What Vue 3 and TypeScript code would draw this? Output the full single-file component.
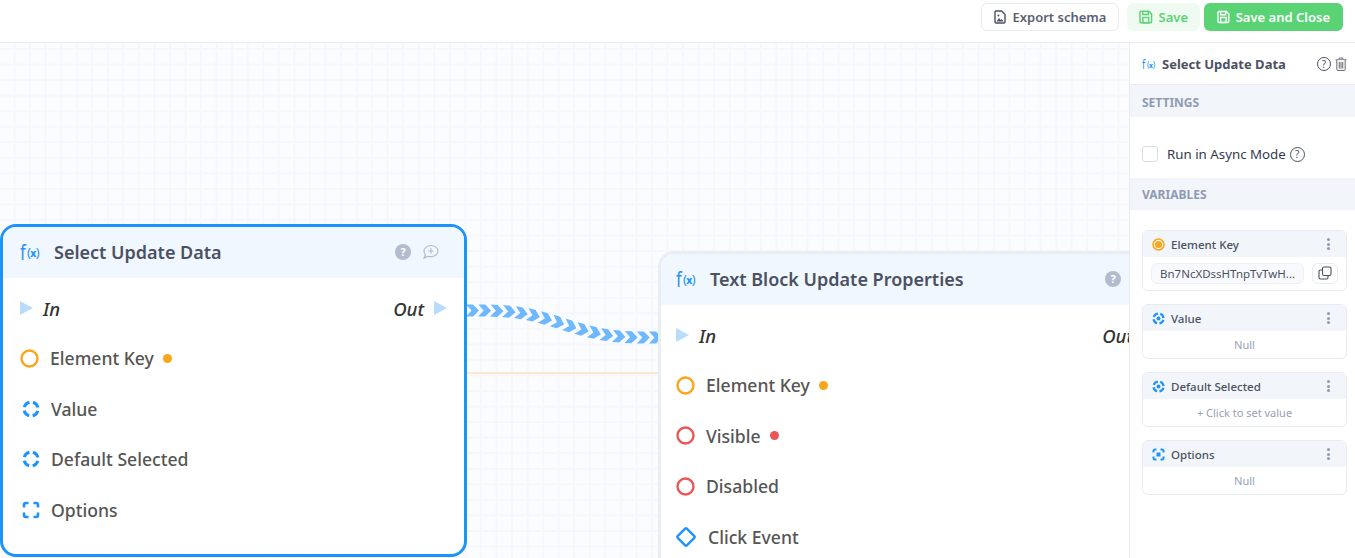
<script setup lang="ts">
type Pin = { label: string; kind: 'circle-o' | 'circle-r' | 'dash' | 'square' | 'diamond'; dot?: string };

const nodes: { id: string; title: string; pins: Pin[] }[] = [
  {
    id: 'first',
    title: 'Select Update Data',
    pins: [
      { label: 'Element Key', kind: 'circle-o', dot: '#faa61a' },
      { label: 'Value', kind: 'dash' },
      { label: 'Default Selected', kind: 'dash' },
      { label: 'Options', kind: 'square' },
    ],
  },
  {
    id: 'second',
    title: 'Text Block Update Properties',
    pins: [
      { label: 'Element Key', kind: 'circle-o', dot: '#faa61a' },
      { label: 'Visible', kind: 'circle-r', dot: '#eb5757' },
      { label: 'Disabled', kind: 'circle-r' },
      { label: 'Click Event', kind: 'diamond' },
    ],
  },
];

const vars: { label: string; icon: 'orange' | 'dash' | 'square'; body: string }[] = [
  { label: 'Element Key', icon: 'orange', body: '' },
  { label: 'Value', icon: 'dash', body: 'Null' },
  { label: 'Default Selected', icon: 'dash', body: '+ Click to set value' },
  { label: 'Options', icon: 'square', body: 'Null' },
];

// Chevrons along the connection: evenly spaced in x, eased in y
const smooth = (u: number) => u * u * (3 - 2 * u);
const wireY = (x: number) => {
  const u = Math.min(1, Math.max(0, (x - 466) / 194));
  return 267.5 + 27 * smooth(smooth(u));
};
const chevrons = Array.from({ length: 16 }, (_, i) => {
  const x = 473 + 12.2 * i;
  const y = wireY(x);
  const a = (Math.atan2(wireY(x + 2) - wireY(x - 2), 4) * 180) / Math.PI;
  return `translate(${x.toFixed(1)} ${y.toFixed(1)}) rotate(${a.toFixed(1)})`;
});
</script>

<template>
  <div class="app">
    <header class="topbar">
      <button class="btn outline">
        <svg width="12" height="14" viewBox="0 0 12 14"><path d="M1.500 1h6L11 4.500V12a1 1 0 0 1-1 1H2a1 1 0 0 1-1-1V2a1 1 0 0 1 .5-1z" fill="none" stroke="#4b5162" stroke-width="1.400"/><path d="M2.500 11.500 5 8l1.600 2 1.100-1 1.800 2.500z" fill="#4b5162"/><circle cx="4.400" cy="5.600" r="1" fill="#4b5162"/></svg>
        Export schema
      </button>
      <button class="btn soft">
        <svg width="14" height="14" viewBox="0 0 14 14" fill="none" stroke="#5ad374" stroke-width="1.500"><path d="M2.200 1h8L13 3.800v8a1.200 1.200 0 0 1-1.200 1.200H2.200A1.200 1.200 0 0 1 1 11.800V2.200A1.200 1.200 0 0 1 2.200 1z"/><path d="M4 1.200V4.500h5.500V1.200"/><rect x="4" y="7.500" width="6" height="5.500"/></svg>
        Save
      </button>
      <button class="btn solid">
        <svg width="14" height="14" viewBox="0 0 14 14" fill="none" stroke="#fff" stroke-width="1.500"><path d="M2.200 1h8L13 3.800v8a1.200 1.200 0 0 1-1.200 1.200H2.200A1.200 1.200 0 0 1 1 11.800V2.200A1.200 1.200 0 0 1 2.200 1z"/><path d="M4 1.200V4.500h5.500V1.200"/><rect x="4" y="7.500" width="6" height="5.500"/></svg>
        Save and Close
      </button>
    </header>

    <div class="workspace">
      <main class="canvas">
        <svg class="wires" width="1129" height="515">
          <path d="M466 330H660" stroke="#f9e7cf" stroke-width="2" fill="none"/>
          <g fill="#6db8ff">
            <path v-for="(c, i) in chevrons" :key="i" :transform="c" d="M-7-6H0L6 0 0 6H-7L-1.500 0z"/>
          </g>
        </svg>

        <section v-for="n in nodes" :key="n.id" class="node" :class="n.id">
          <div class="node-head">
            <span class="fx"><span class="fx-f">f</span><span class="fx-x">(<b>x</b>)</span></span>
            <span class="node-title">{{ n.title }}</span>
            <span class="head-icons">
              <span class="help-solid">?</span>
              <svg width="18" height="16" viewBox="0 0 18 16" fill="none" stroke="#b3bccf" stroke-width="1.200"><path d="M10 1.500a7 5.600 0 0 1 0 11.200c-1 0-2-.2-2.800-.5L3 14l1.300-3.200A5.500 5.500 0 0 1 3 7.100c0-3.100 3.100-5.600 7-5.600z"/><path d="M10 4.300v5.400M7.300 7h5.400"/></svg>
            </span>
          </div>
          <div class="exec">
            <span class="exec-side">
              <span class="tri"></span>
              <em>In</em>
            </span>
            <span class="exec-side">
              <em>Out</em>
              <span class="tri"></span>
            </span>
          </div>
          <div v-for="p in n.pins" :key="p.label" class="pin">
            <svg v-if="p.kind === 'circle-o' || p.kind === 'circle-r'" class="pin-icon" width="19" height="19" viewBox="0 0 19 19" fill="none" :stroke="p.kind === 'circle-o' ? '#faa61a' : '#eb5757'" stroke-width="2.400"><circle cx="9.500" cy="9.500" r="8"/></svg>
            <svg v-else-if="p.kind === 'dash'" class="pin-icon shift" width="18" height="18" viewBox="0 0 18 18" fill="none" stroke="#1e93fb" stroke-width="3"><circle cx="9" cy="9" r="7" stroke-dasharray="7.400 3.600" stroke-dashoffset="-1.800"/></svg>
            <svg v-else-if="p.kind === 'square'" class="pin-icon shift" width="18" height="18" viewBox="0 0 18 18" fill="none" stroke="#1e93fb" stroke-width="2.600"><path d="M2 6.500V4a2 2 0 0 1 2-2h2.500M11.500 2H14a2 2 0 0 1 2 2v2.500M16 11.500V14a2 2 0 0 1-2 2h-2.500M6.500 16H4a2 2 0 0 1-2-2v-2.500"/></svg>
            <svg v-else class="pin-icon wide" width="22" height="22" viewBox="0 0 22 22" fill="none" stroke="#1e93fb" stroke-width="2.400"><rect x="4.500" y="4.500" width="13" height="13" rx="1.500" transform="rotate(45 11 11)"/></svg>
            <span class="pin-label">{{ p.label }}</span>
            <span v-if="p.dot" class="pin-dot" :style="{ background: p.dot }"></span>
          </div>
        </section>
      </main>

      <aside class="panel">
        <div class="panel-head">
          <span class="fx small"><span class="fx-f">f</span><span class="fx-x">(<b>x</b>)</span></span>
          <span class="panel-title">Select Update Data</span>
          <span class="help-line">?</span>
          <svg width="12" height="14" viewBox="0 0 12 14" fill="none" stroke="#66718a" stroke-width="1"><path d="M.5 2.800h11"/><path d="M4.200 2.500V1h3.600v1.500"/><path d="M1.800 3v9.500a1 1 0 0 0 1 1h6.400a1 1 0 0 0 1-1V3" fill="#fdf1df"/><path d="M4.300 5v6.500M6 5v6.500M7.700 5v6.500"/></svg>
        </div>
        <div class="band top">SETTINGS</div>
        <label class="async">
          <span class="check"></span>
          <span>Run in Async Mode</span>
          <span class="help-line dark">?</span>
        </label>
        <div class="band">VARIABLES</div>
        <div class="vars">
          <div v-for="v in vars" :key="v.label" class="var">
            <div class="var-head">
              <svg v-if="v.icon === 'orange'" width="13" height="13" viewBox="0 0 13 13"><circle cx="6.500" cy="6.500" r="5.500" fill="none" stroke="#faa61a" stroke-width="1.500"/><circle cx="6.500" cy="6.500" r="3.500" fill="#faa61a"/></svg>
              <svg v-else-if="v.icon === 'dash'" width="13" height="13" viewBox="0 0 13 13"><circle cx="6.500" cy="6.500" r="5" fill="none" stroke="#1e93fb" stroke-width="2.200" stroke-dasharray="5.400 2.450" stroke-dashoffset="-1.225"/><circle cx="6.500" cy="6.500" r="2" fill="#1e93fb"/></svg>
              <svg v-else width="13" height="13" viewBox="0 0 13 13" fill="none" stroke="#1e93fb" stroke-width="2"><path d="M1.500 4.500V3A1.500 1.500 0 0 1 3 1.500h1.500M8.500 1.500H10A1.500 1.500 0 0 1 11.500 3v1.500M11.500 8.500V10a1.500 1.500 0 0 1-1.500 1.500H8.500M4.500 11.500H3A1.500 1.500 0 0 1 1.500 10V8.500"/><rect x="4.500" y="4.500" width="4" height="4" fill="#1e93fb" stroke="none"/></svg>
              <span class="var-name">{{ v.label }}</span>
              <span class="dots"><i></i><i></i><i></i></span>
            </div>
            <div v-if="v.icon === 'orange'" class="var-key">
              <span class="key-value">Bn7NcXDssHTnpTvTwH...</span>
              <span class="copy">
                <svg width="14" height="14" viewBox="0 0 14 14" fill="none" stroke="#4b5162" stroke-width="1.100"><rect x="4.500" y="1" width="8.500" height="8.500" rx="1.500"/><path d="M4.500 4H2.500A1.500 1.500 0 0 0 1 5.500v6A1.500 1.500 0 0 0 2.500 13h6a1.500 1.500 0 0 0 1.500-1.500V9.500"/></svg>
              </span>
            </div>
            <div v-else class="var-body">{{ v.body }}</div>
          </div>
        </div>
      </aside>
    </div>
  </div>
</template>

<style>
html, body { margin: 0; background: #fff; }
</style>

<style scoped>
.app {
  width: 1355px;
  height: 558px;
  overflow: hidden;
  display: flex;
  flex-direction: column;
  font-family: "Noto Sans", "Open Sans", sans-serif;
  color: #4b5162;
}
.topbar {
  height: 43px;
  flex: none;
  box-sizing: border-box;
  border-bottom: 1px solid #e8ebf1;
  display: flex;
  align-items: flex-start;
  justify-content: flex-end;
  gap: 4px;
  padding: 3px 12px 0 0;
  background: #fff;
}
.btn {
  height: 28px;
  box-sizing: border-box;
  border-radius: 6px;
  border: 1px solid transparent;
  display: flex;
  align-items: center;
  gap: 6px;
  font: 600 13px "Noto Sans", sans-serif;
  white-space: nowrap;
  padding: 0 11px;
  background: none;
}
.btn.outline { width: 138px; border-color: #e8ebf1; color: #5b6070; margin-right: 4px; justify-content: center; gap: 7px; }
.btn.soft { width: 73px; background: #effbf1; color: #5ad374; }
.btn.solid { width: 139px; background: #5ad374; color: #fff; padding: 0 12px; }

.workspace { flex: 1; display: flex; min-height: 0; }
.canvas {
  flex: 1;
  position: relative;
  overflow: hidden;
  background-color: #fbfcfe;
  background-image:
    linear-gradient(#f5f7fb 2px, transparent 2px),
    linear-gradient(90deg, #f5f7fb 2px, transparent 2px);
  background-size: 15.56px 15.56px;
  background-position: -2px 5px;
}
.wires { position: absolute; left: 0; top: 0; }
.node {
  position: absolute;
  box-sizing: border-box;
  background: #fff;
  border: 3px solid #e9edf4;
  border-radius: 16px;
  overflow: hidden;
}
.node.first { left: 0; top: 181px; width: 467px; height: 333px; border-color: #1e93fb; }
.node.second { left: 658px; top: 208px; width: 519px; height: 340px; }
.node.second .node-head { padding-left: 15px; }
.node.second .exec { padding-left: 15px; padding-right: 18px; }
.node.second .pin { padding-left: 15px; }
.node-head {
  height: 51px;
  box-sizing: border-box;
  background: #f0f7ff;
  display: flex;
  align-items: center;
  padding: 0 17px 2px 17px;
}
.fx { color: #1e93fb; width: 34px; white-space: nowrap; display: flex; align-items: center; flex: none; }
.fx-f { font-size: 21px; font-weight: 400; transform: scaleX(.8); transform-origin: left; width: 6px; }
.fx-x { font-size: 13px; font-weight: 400; letter-spacing: -.6px; margin-left: 1px; }
.fx-x b { font-size: 10px; font-weight: 800; }
.fx.small { width: 20px; padding-top: 1px; }
.fx.small .fx-f { font-size: 12px; width: 4px; }
.fx.small .fx-x { font-size: 8px; letter-spacing: -.3px; }
.fx.small .fx-x b { font-size: 6.500px; }
.node-title { font-size: 18px; font-weight: 600; color: #4b5162; }
.head-icons { margin-left: auto; display: flex; align-items: center; gap: 10px; padding-right: 8px; }
.help-solid {
  width: 16px; height: 16px; border-radius: 50%;
  background: #b3bccf; color: #fff;
  font-size: 11px; font-weight: 700; text-align: center; line-height: 16px;
}
.exec {
  height: 50px;
  margin-top: 5px;
  display: flex;
  justify-content: space-between;
  align-items: center;
  padding: 0 17px;
}
.exec-side { display: flex; align-items: center; gap: 10px; }
.exec em { font-size: 18.500px; font-weight: 500; color: #333; }
.tri {
  width: 0; height: 0;
  border-left: 13px solid #b9dcfd;
  border-top: 7px solid transparent;
  border-bottom: 7px solid transparent;
}
.pin {
  height: 50.500px;
  display: flex;
  align-items: center;
  padding-left: 17px;
  font-size: 17.600px;
  font-weight: 500;
  color: #555;
}
.pin-label { margin-left: 11px; }
.pin-icon.shift + .pin-label, .pin-icon.wide + .pin-label { margin-left: 12px; }
.pin-dot { width: 9px; height: 9px; border-radius: 50%; margin-left: 9px; }
.pin-icon { display: block; flex: none; }
.pin-icon.shift { margin-left: 2px; margin-right: -1px; }
.pin-icon.wide { margin-left: -1px; margin-right: -1px; }

.panel {
  width: 226px;
  flex: none;
  box-sizing: border-box;
  border-left: 1px solid #e8ebf1;
  background: #fff;
}
.panel-head {
  height: 42px;
  box-sizing: border-box;
  display: flex;
  align-items: center;
  padding: 0 8px 0 12px;
  border-bottom: 1px solid #e8ebf1;
}
.panel-title { font-size: 13px; font-weight: 700; color: #4b5162; }
.help-line {
  width: 14px; height: 14px; box-sizing: border-box;
  border: 1px solid #4b5162; border-radius: 50%;
  font-size: 10px; line-height: 12px; text-align: center; color: #4b5162;
  margin-left: auto; margin-right: 4px;
}
.band {
  height: 32px;
  background: #f2f5fa;
  color: #8f9bb3;
  font-size: 12px;
  font-weight: 700;
  line-height: 33px;
  padding-left: 12px;
}
.band.top { line-height: 35px; }
.async {
  height: 61px;
  box-sizing: border-box;
  padding: 13px 0 0 12px;
  display: flex;
  align-items: center;
  font-size: 13.300px;
  color: #333a4d;
}
.check {
  width: 16px; height: 16px; box-sizing: border-box;
  border: 1px solid #d8dce5; border-radius: 3px;
  margin-right: 9px;
}
.help-line.dark { width: 15px; height: 15px; line-height: 13px; margin-left: 4px; margin-right: 0; }
.vars { padding: 20px 8px 0 12px; display: flex; flex-direction: column; gap: 13px; }
.var {
  border: 1px solid #e8ebf1;
  border-radius: 6px;
  overflow: hidden;
  font-size: 11.500px;
}
.var-head {
  height: 26px;
  background: #f2f5fa;
  display: flex;
  align-items: center;
  padding: 0 9px;
}
.var-name { margin-left: 6px; font-weight: 500; color: #4b5162; }
.dots { margin-left: auto; display: flex; flex-direction: column; gap: 1.500px; margin-right: 7px; }
.dots i { width: 3px; height: 3px; border-radius: 50%; background: #8f9bb3; display: block; }
.var-body {
  height: 27px;
  line-height: 27px;
  text-align: center;
  font-size: 11px;
  color: #97a1b6;
}
.var-key { height: 33px; display: flex; align-items: center; padding: 0 8px 1px; box-sizing: border-box; gap: 8px; }
.key-value {
  width: 153px; height: 21px; box-sizing: border-box;
  background: #f8f9fc; border: 1px solid #eef0f5; border-radius: 6px;
  font-size: 11.500px; line-height: 19px; padding-left: 8px; color: #4b5162;
  white-space: nowrap; overflow: hidden;
}
.copy {
  width: 26px; height: 21px; box-sizing: border-box;
  border: 1px solid #e8ebf1; border-radius: 6px;
  display: flex; align-items: center; justify-content: center;
}
</style>
